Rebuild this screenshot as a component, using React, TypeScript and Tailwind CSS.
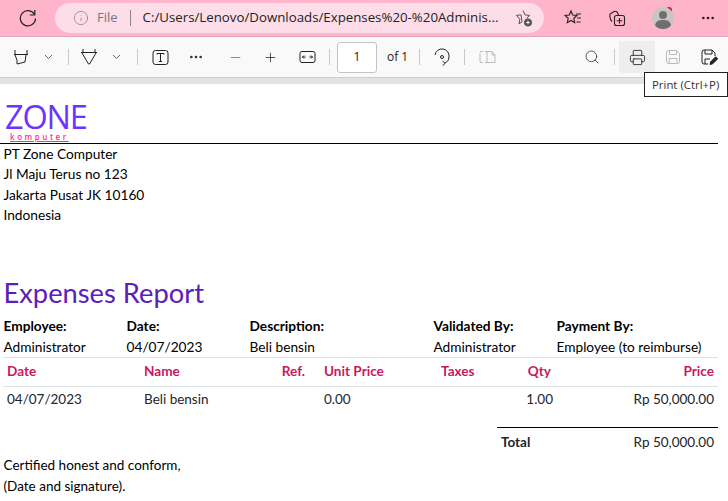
import { MoreHorizontal, Minus, Plus, Search, Printer, Info } from "lucide-react";

const ui = "font-['Open_Sans',sans-serif]";

function Divider() {
  return <div className="h-[16px] w-px bg-[#c8c8c8]" />;
}

function Chevron() {
  return (
    <svg width="9" height="6" viewBox="0 0 9 6" fill="none" stroke="#666" strokeWidth="1">
      <path d="M1 1l3.5 3.5L8 1" />
    </svg>
  );
}

function TopBar() {
  return (
    <div className="flex h-[37px] items-center bg-[#feb4cb] border-b border-[#e3a5b9]">
      <div className="flex w-[55px] justify-center">
        <svg width="18" height="18" viewBox="0 0 18 18" fill="none" stroke="#222" strokeWidth="1.2">
          <path d="M15.5 5.5A7.6 7.6 0 1 0 16.5 9.5" />
          <path d="M15.8 1v5h-5" />
        </svg>
      </div>
      <div className="flex h-[30px] w-[489px] items-center rounded-full bg-[#fddde8] pl-[18px]">
        <Info size={16} strokeWidth={1} color="#777" />
        <span className={`${ui} ml-[8px] text-[13px] text-[#777]`}>File</span>
        <div className="ml-[12px] h-[16px] w-px bg-[#888]" />
        <span className={`${ui} ml-[12px] w-[360px] whitespace-nowrap text-[13.27px] text-[#222]`}>
          C:/Users/Lenovo/Downloads/Expenses%20-%20Adminis...
        </span>
        <svg className="ml-[12px]" width="18" height="18" viewBox="0 0 18 18" fill="none" stroke="#555" strokeWidth="1">
          <path d="M8 1.5l2 4.4 4.7.5-3.4 3.1M7 13l-3 1.8.9-4.7L1.3 6.4 6 5.9z" />
          <circle cx="13" cy="13.5" r="3.6" fill="#555" />
          <path d="M13 11.8v3.4M11.3 13.5h3.4" stroke="#fff" />
        </svg>
      </div>
      <div className="ml-[20px] flex items-center">
        <svg width="18" height="18" viewBox="0 0 18 18" fill="none" stroke="#222" strokeWidth="1.1">
          <path d="M7 2l1.7 4 4.3.4-3.2 2.9.9 4.4L7 11.5l-3.7 2.2.9-4.4L1 6.4 5.3 6z" />
          <path d="M12 5h5M13 9h4M12.5 13h4" />
        </svg>
        <svg className="ml-[26px]" width="18" height="18" viewBox="0 0 18 18" fill="none" stroke="#222" strokeWidth="1.1">
          <path d="M4 12.5C2.5 11 1.5 8 2 5l4-2.5c1.2-.5 2.5-.2 3.3.8L10.5 6" />
          <rect x="6.5" y="6.5" width="10" height="10" rx="2" />
          <path d="M11.5 9v5.5M8.8 11.7h5.5" />
        </svg>
        <div className="relative ml-[26px] h-[22px] w-[22px] overflow-hidden rounded-full bg-[#c9c4c6]">
          <div className="absolute left-[7px] top-[4px] h-[8px] w-[8px] rounded-full bg-[#6f6f6f]" />
          <div className="absolute left-[3px] top-[13px] h-[12px] w-[16px] rounded-full bg-[#6f6f6f]" />
        </div>
        <div className="ml-[-8px] mt-[-16px] h-[6px] w-[6px] rounded-full bg-[#f0142f]" />
        <MoreHorizontal className="ml-[28px]" size={16} strokeWidth={2} color="#222" />
      </div>
    </div>
  );
}

function Toolbar() {
  return (
    <div className="flex h-[41px] items-center bg-[#f9f9f9] pl-[13px] border-b border-[#cfcfcf]">
      <svg width="16" height="18" viewBox="0 0 16 18" fill="none" stroke="#222" strokeWidth="1">
        <path d="M2 2v4M14 2v4M1 6.5h14M2 7l2 5v4l8-2 1-7" />
      </svg>
      <div className="ml-[15px]"><Chevron /></div>
      <div className="ml-[15px]"><Divider /></div>
      <svg className="ml-[11px]" width="18" height="20" viewBox="0 0 18 20" fill="none" stroke="#222" strokeWidth="1">
        <path d="M3 2v3M15 2v3M1 5.5h16M2 6l6.5 11h1L16 6" />
      </svg>
      <div className="ml-[14px]"><Chevron /></div>
      <div className="ml-[16px]"><Divider /></div>
      <svg className="ml-[14px]" width="17" height="17" viewBox="0 0 17 17" fill="none" stroke="#222" strokeWidth="1">
        <rect x="1" y="1.5" width="15" height="14" rx="2.5" />
        <path d="M5 5.5V4.5h7v1M8.5 4.5v8M7 12.5h3" />
      </svg>
      <MoreHorizontal className="ml-[19px]" size={16} strokeWidth={2} color="#333" />
      <Minus className="ml-[24px]" size={15} strokeWidth={1.2} color="#666" />
      <Plus className="ml-[20px]" size={15} strokeWidth={1.2} color="#222" />
      <svg className="ml-[21px]" width="17" height="14" viewBox="0 0 17 14" fill="none" stroke="#222" strokeWidth="1">
        <rect x="1" y="1.5" width="15" height="11" rx="2" />
        <path d="M3.5 7h3M13.5 7h-3M5 5.5L3.5 7 5 8.5M12 5.5L13.5 7 12 8.5" />
      </svg>
      <div className="ml-[13px]"><Divider /></div>
      <div className={`${ui} ml-[7px] flex h-[31px] w-[40px] items-center justify-center rounded-[3px] border border-[#c4c4c4] bg-white text-[12px] text-[#222]`}>
        1
      </div>
      <span className={`${ui} ml-[10px] text-[12px] text-[#222]`}>of 1</span>
      <div className="ml-[11px]"><Divider /></div>
      <svg className="ml-[13px]" width="18" height="18" viewBox="0 0 18 18" fill="none" stroke="#222" strokeWidth="1">
        <path d="M2 7a7 7 0 0 1 14 2c0 3-2 5-4 6" />
        <path d="M9.5 13l2.5 2.2-2 2.5" />
        <circle cx="9" cy="9" r="1.5" />
      </svg>
      <div className="ml-[13px]"><Divider /></div>
      <svg className="ml-[14px]" width="17" height="14" viewBox="0 0 17 14" fill="none" stroke="#bbb" strokeWidth="1">
        <path d="M1 3v9M4 1.5H1M8 1.5H6M4 12.5H1M8 12.5H6M8 1.5v11M8 1.5h5l3 3.5v7.5H8M13 1.5V5h3" />
      </svg>
      <Search className="ml-[88px]" size={16} strokeWidth={1.1} color="#222" />
      <div className="ml-[14px]"><Divider /></div>
      <div className="ml-[4px] flex h-[32px] w-[36px] items-center justify-center bg-[#eeeeee]">
        <Printer size={17} strokeWidth={1.2} color="#222" />
      </div>
      <svg className="ml-[10px]" width="16" height="16" viewBox="0 0 16 16" fill="none" stroke="#bbb" strokeWidth="1">
        <path d="M1.5 3.5a2 2 0 0 1 2-2h8l3 3v8a2 2 0 0 1-2 2h-9a2 2 0 0 1-2-2zM4.5 1.5v4h7v-4M4 14.5V9.5h8v5" />
      </svg>
      <svg className="ml-[20px]" width="18" height="17" viewBox="0 0 18 17" fill="none" stroke="#222" strokeWidth="1">
        <path d="M7 15H3a2 2 0 0 1-2-2V3a2 2 0 0 1 2-2h8l3 3v3M4 1v4h7V1M4 15v-5h5" />
        <path d="M9 15.5l.7-2.7 5-5 2 2-5 5z" fill="#222" />
      </svg>
    </div>
  );
}

const infos = [
  ["Employee:", "Administrator", "w-[123px]"],
  ["Date:", "04/07/2023", "w-[123px]"],
  ["Description:", "Beli bensin", "w-[184px]"],
  ["Validated By:", "Administrator", "w-[123px]"],
  ["Payment By:", "Employee (to reimburse)", "flex-1"],
];

function Report() {
  return (
    <div className="flex flex-col pr-[10px] font-['Lato',sans-serif] text-[13.7px] leading-[20.3px] text-black">
      <div className="flex h-[60px] flex-col border-b border-black pl-[5px] pt-[18px]">
        <div className="font-['Open_Sans',sans-serif] text-[32.5px] leading-[30px] tracking-[-1.2px] text-[#6a35ff]">ZONE</div>
        <div className="ml-[5px] w-fit font-['Open_Sans',sans-serif] text-[8px] font-semibold leading-[9px] tracking-[2.55px] text-[#ff2d95] underline">
          komputer
        </div>
      </div>
      <div className="pl-[3.5px]">
        <div>PT Zone Computer</div>
        <div>Jl Maju Terus no 123</div>
        <div>Jakarta Pusat JK 10160</div>
        <div>Indonesia</div>
      </div>
      <div className="pl-[3.5px] pt-[52px] text-[27.3px] leading-[32px] text-[#5a20b8]">Expenses Report</div>
      <div className="flex h-[48px] pl-[3.5px] pt-[6px] leading-[21px]">
        {infos.map(([label, value, width]) => (
          <div key={label} className={width}>
            <div className="font-bold">{label}</div>
            <div>{value}</div>
          </div>
        ))}
      </div>
      <div className="ml-[3px] grid h-[30px] grid-cols-[137px_100px_70px_104px_70px_65px_1fr] border-y border-[#dee2e6] px-[4px] pt-[3px] text-[13.6px] font-bold text-[#c8195f]">
        <div>Date</div>
        <div>Name</div>
        <div className="pr-[9px] text-right">Ref.</div>
        <div className="pl-[10px]">Unit Price</div>
        <div className="pl-[23px]">Taxes</div>
        <div className="pr-[2px] text-right">Qty</div>
        <div className="text-right">Price</div>
      </div>
      <div className="ml-[3px] grid h-[21px] grid-cols-[137px_100px_70px_104px_70px_65px_1fr] px-[4px] pt-[2px] text-[13.5px] text-[#212529]">
        <div>04/07/2023</div>
        <div>Beli bensin</div>
        <div />
        <div className="pl-[10px]">0.00</div>
        <div />
        <div className="text-right">1.00</div>
        <div className="text-right">Rp 50,000.00</div>
      </div>
      <div className="ml-[497px] mt-[19px] flex h-[28px] items-center justify-between border-t border-black px-[4px] text-[13.5px] text-[#212529]">
        <span className="font-bold">Total</span>
        <span>Rp 50,000.00</span>
      </div>
      <div className="pl-[3.5px] text-[13.5px] leading-[21px]">
        <div>Certified honest and conform,</div>
        <div>(Date and signature).</div>
      </div>
    </div>
  );
}

export default function App() {
  return (
    <div className="relative h-[501px] w-[728px] overflow-hidden bg-white">
      <TopBar />
      <Toolbar />
      <div className="h-[6px] bg-[#e3e3e3]" />
      <Report />
      <div className={`${ui} absolute left-[644px] top-[72px] flex h-[25px] w-[84px] items-center whitespace-nowrap border border-[#222] bg-white pl-[7px] pt-[1px] text-[11.4px] text-[#333]`}>
        Print (Ctrl+P)
      </div>
    </div>
  );
}
